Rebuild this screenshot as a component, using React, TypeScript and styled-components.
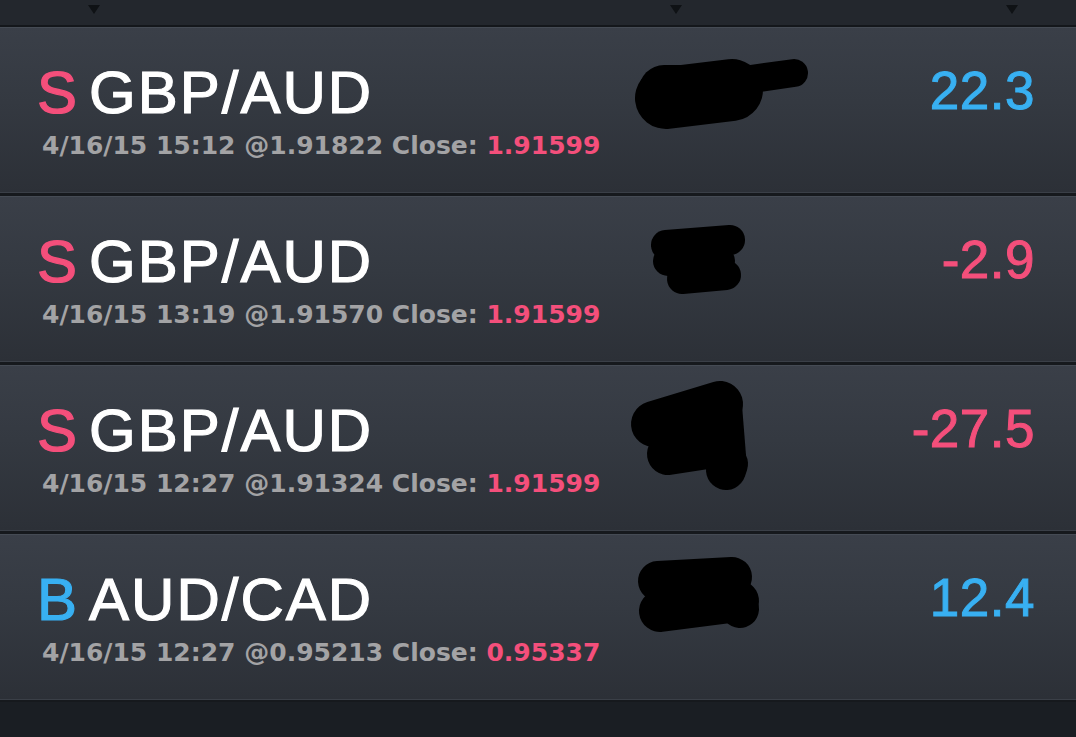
import React from "react";
import styled, { createGlobalStyle } from "styled-components";

const Global = createGlobalStyle`
  html, body { margin: 0; padding: 0; background: #1a1e23; }
  body { width: 1076px; height: 737px; overflow: hidden; }
`;

const Page = styled.div`
  width: 1076px;
  height: 737px;
  background: #1a1e23;
  display: flex;
  flex-direction: column;
`;

const Header = styled.div`
  height: 25px;
  background: #23272d;
  border-bottom: 2px solid #14171b;
  display: flex;
  align-items: flex-start;
`;

const Caret = styled.div<{ $left: number }>`
  margin-left: ${(p) => p.$left}px;
  margin-top: 5px;
  width: 0;
  height: 0;
  border-left: 6px solid transparent;
  border-right: 6px solid transparent;
  border-top: 9px solid #0f1215;
`;

const List = styled.div`
  display: flex;
  flex-direction: column;
  gap: 3px;
  background: #16191d;
  padding-bottom: 2px;
`;

const Row = styled.div`
  height: 164px;
  border-top: 1px solid #454b54;
  border-bottom: 1px solid #3a3f47;
  background: linear-gradient(180deg, #3a3f48 0%, #343941 45%, #2c3037 100%);
  display: grid;
  grid-template-columns: 583px 200px 1fr;
  padding-left: 37px;
  padding-right: 41px;
`;

const Info = styled.div`
  padding-top: 35px;
  display: flex;
  flex-direction: column;
`;

const Title = styled.div`
  font-family: "Liberation Sans", Arial, sans-serif;
  font-size: 60px;
  line-height: 60px;
  letter-spacing: 2px;
  color: #ffffff;
  -webkit-text-stroke: 1.2px currentColor;
  white-space: nowrap;
`;

const Side = styled.span<{ $buy: boolean }>`
  color: ${(p) => (p.$buy ? "#38b0f2" : "#f44f7b")};
  margin-right: 10px;
`;

const Sub = styled.div`
  margin-top: 10px;
  margin-left: 5px;
  font-family: "DejaVu Sans", Verdana, sans-serif;
  font-weight: bold;
  font-size: 25px;
  line-height: 25px;
  color: #a3a3a5;
  white-space: nowrap;
`;

const Close = styled.span`
  color: #f44f7b;
`;

const Blob = styled.svg`
  width: 200px;
  height: 164px;
  display: block;
`;

const Value = styled.div<{ $pos: boolean }>`
  padding-top: 36px;
  text-align: right;
  font-family: "Liberation Sans", Arial, sans-serif;
  font-size: 53px;
  line-height: 53px;
  letter-spacing: 0.5px;
  -webkit-text-stroke: 1px currentColor;
  color: ${(p) => (p.$pos ? "#38b0f2" : "#f44f7b")};
`;

type Stroke = { d: string; w: number };

type Trade = {
  side: "S" | "B";
  pair: string;
  time: string;
  open: string;
  close: string;
  value: string;
  blob: Stroke[];
};

const trades: Trade[] = [
  {
    side: "S",
    pair: "GBP/AUD",
    time: "4/16/15 15:12",
    open: "1.91822",
    close: "1.91599",
    value: "22.3",
    blob: [
      { d: "M46 70 L112 62", w: 62 },
      { d: "M44 62 L60 62", w: 50 },
      { d: "M96 56 L174 45", w: 28 },
    ],
  },
  {
    side: "S",
    pair: "GBP/AUD",
    time: "4/16/15 13:19",
    open: "1.91570",
    close: "1.91599",
    value: "-2.9",
    blob: [
      { d: "M46 48 L110 43", w: 30 },
      { d: "M48 64 L100 64", w: 30 },
      { d: "M62 82 L106 78", w: 30 },
    ],
  },
  {
    side: "S",
    pair: "GBP/AUD",
    time: "4/16/15 12:27",
    open: "1.91324",
    close: "1.91599",
    value: "-27.5",
    blob: [
      { d: "M34 58 L100 38", w: 46 },
      { d: "M100 40 L104 90", w: 44 },
      { d: "M48 88 L100 80", w: 42 },
      { d: "M108 98 L106 104", w: 40 },
    ],
  },
  {
    side: "B",
    pair: "AUD/CAD",
    time: "4/16/15 12:27",
    open: "0.95213",
    close: "0.95337",
    value: "12.4",
    blob: [
      { d: "M38 46 L112 42", w: 40 },
      { d: "M40 76 L118 66", w: 42 },
      { d: "M118 68 L120 74", w: 38 },
    ],
  },
];

export default function App() {
  return (
    <Page>
      <Global />
      <Header>
        <Caret $left={88} />
        <Caret $left={570} />
        <Caret $left={324} />
      </Header>
      <List>
        {trades.map((t, i) => (
          <Row key={i}>
            <Info>
              <Title>
                <Side $buy={t.side === "B"}>{t.side}</Side>
                {t.pair}
              </Title>
              <Sub>
                {t.time} @{t.open} Close: <Close>{t.close}</Close>
              </Sub>
            </Info>
            <Blob viewBox="0 0 200 164">
              {t.blob.map((s, j) => (
                <path
                  key={j}
                  d={s.d}
                  stroke="#000"
                  strokeWidth={s.w}
                  strokeLinecap="round"
                  strokeLinejoin="round"
                  fill="none"
                />
              ))}
            </Blob>
            <Value $pos={!t.value.startsWith("-")}>{t.value}</Value>
          </Row>
        ))}
      </List>
    </Page>
  );
}
